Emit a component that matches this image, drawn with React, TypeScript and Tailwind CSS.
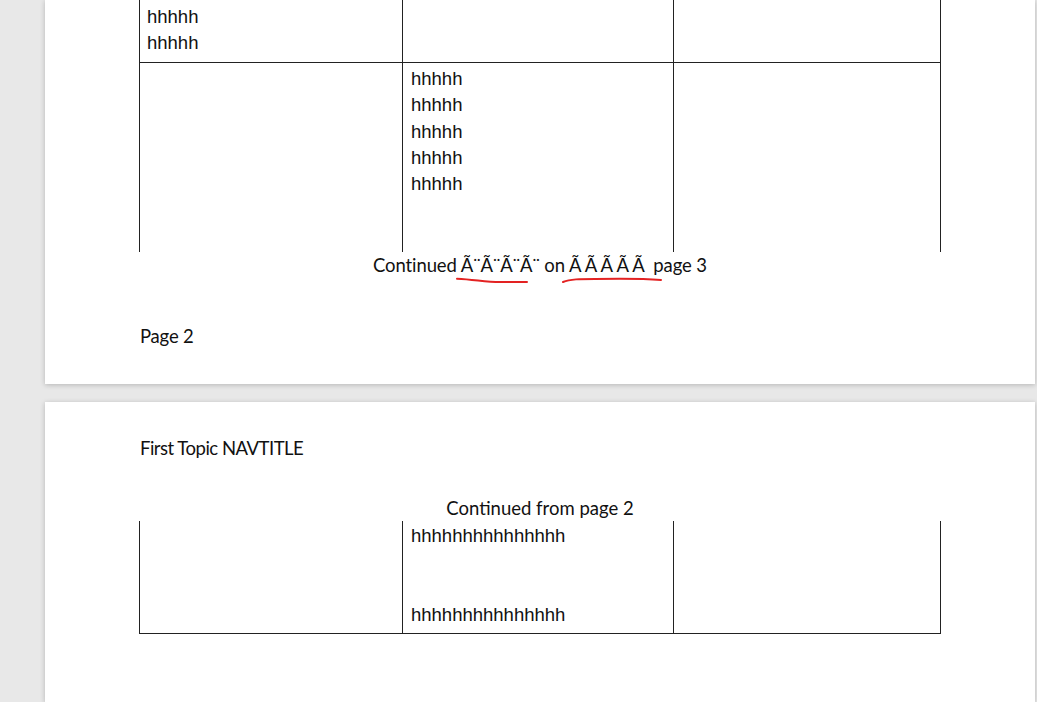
import React from 'react';

const arial = { fontFamily: '"Liberation Sans", Arial, sans-serif' };
const calibri = { fontFamily: 'Lato, "Open Sans", sans-serif' };

const Lines: React.FC<{ lines: string[] }> = ({ lines }) => (
  <>
    {lines.map((l, i) => (
      <div key={i} className="h-[26.25px] leading-[26.25px] whitespace-pre">
        {l || '\u00a0'}
      </div>
    ))}
  </>
);

export default function App() {
  const five = ['hhhhh', 'hhhhh', 'hhhhh', 'hhhhh', 'hhhhh'];
  const long = 'hhhhhhhhhhhhhhh';

  return (
    <div className="min-h-[702px] h-[702px] overflow-hidden bg-[#e8e8e8] pl-[45px] pr-[2px] flex flex-col gap-[18px] text-[#111]">
      {/* Page 2 (tail) */}
      <div className="h-[384px] shrink-0 bg-white shadow-[0_1px_5px_rgba(0,0,0,0.22)]">
        <div className="ml-[94px] w-[802px]">
          <div className="grid grid-cols-[263px_271px_268px] text-[18.5px]" style={arial}>
            <div className="h-[63px] border-l border-b border-[#222] pl-[7px] pt-[4px]">
              <Lines lines={['hhhhh', 'hhhhh']} />
            </div>
            <div className="h-[63px] border-l border-b border-[#222]" />
            <div className="h-[63px] border-l border-r border-b border-[#222]" />
            <div className="h-[189px] border-l border-[#222]" />
            <div className="h-[189px] border-l border-[#222] pl-[8px] pt-[3px]">
              <Lines lines={five} />
            </div>
            <div className="h-[189px] border-l border-r border-[#222]" />
          </div>
          <div className="relative h-[26px] leading-[26px] text-center text-[18.5px] tracking-[-0.1px] whitespace-pre" style={calibri}>
            {'Continued \u00c3\u00a8\u00c3\u00a8\u00c3\u00a8\u00c3\u00a8 on \u00c3\u00a0\u00c3\u00a0\u00c3\u00a0\u00c3\u00a0\u00c3\u00a0 page 3'}
            <svg className="absolute left-[311px] top-[16px]" width="220" height="22" viewBox="0 0 220 22" fill="none">
              <path d="M7 10.7 C 25 11.5, 35 14, 50 14 L 77 14" stroke="#e32222" strokeWidth="2" strokeLinecap="round" />
              <path d="M113 14 C 120 11, 130 11, 145 11 C 175 10.5, 195 10.7, 211 12" stroke="#e32222" strokeWidth="2" strokeLinecap="round" />
            </svg>
          </div>
          <div className="mt-[45px] h-[26px] leading-[26px] pl-px text-[18.5px] tracking-[-0.2px]" style={calibri}>
            Page 2
          </div>
        </div>
      </div>

      {/* Page 3 */}
      <div className="flex-1 shrink-0 bg-white shadow-[0_1px_5px_rgba(0,0,0,0.22)]">
        <div className="ml-[94px] w-[802px] pt-[33px]">
          <div className="h-[26px] leading-[26px] pl-px text-[18.5px] tracking-[-0.5px]" style={calibri}>
            First Topic NAVTITLE
          </div>
          <div className="mt-[34px] h-[26px] leading-[26px] text-center text-[18.5px]" style={calibri}>
            Continued from page 2
          </div>
          <div className="grid grid-cols-[263px_271px_268px] text-[18.5px]" style={arial}>
            <div className="h-[113px] border-l border-b border-[#222]" />
            <div className="h-[113px] border-l border-b border-[#222] pl-[8px] pt-[2px]">
              <Lines lines={[long, '', '', long]} />
            </div>
            <div className="h-[113px] border-l border-r border-b border-[#222]" />
          </div>
        </div>
      </div>
    </div>
  );
}
